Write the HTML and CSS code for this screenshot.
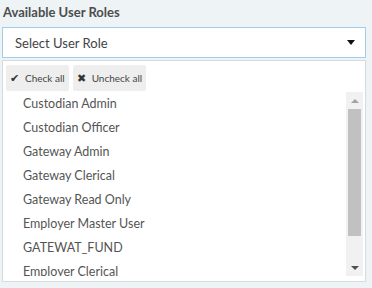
FILE: index.html
```html
<!DOCTYPE html>
<html lang="en">
<head>
  <meta charset="UTF-8" />
  <title>Available User Roles</title>
  <link rel="stylesheet" href="styles.css">
</head>
<body>
  <div class="field">
    <label class="field-label">Available User Roles</label>
    <div class="select-box">
      <span>Select User Role</span>
      <span class="caret"></span>
    </div>
    <div class="dropdown">
      <div class="toolbar">
        <button class="tool-btn"><span class="ico">&#10004;</span>Check all</button>
        <button class="tool-btn"><span class="ico">&#10006;</span>Uncheck all</button>
      </div>
      <div class="list-wrap">
        <ul class="options">
          <li>Custodian Admin</li>
          <li>Custodian Officer</li>
          <li>Gateway Admin</li>
          <li>Gateway Clerical</li>
          <li>Gateway Read Only</li>
          <li>Employer Master User</li>
          <li>GATEWAT_FUND</li>
          <li>Employer Clerical</li>
        </ul>
        <div class="scrollbar">
          <div class="arrow up"></div>
          <div class="track"><div class="thumb"></div></div>
          <div class="arrow down"></div>
        </div>
      </div>
    </div>
  </div>
</body>
</html>
```

FILE: styles.css
```css
body {
  margin: 0;
  background-color: #eef3f6;
  font-family: Lato, 'Open Sans', sans-serif;
  color: #555;
}
.field {
  padding: 4px 6px 0 2px;
}
.field-label {
  display: block;
  font-weight: bold;
  font-size: 13px;
  line-height: 16px;
  margin-left: 1px;
  color: #4d4d4d;
}
.select-box {
  margin-top: 7px;
  height: 29px;
  background: white;
  border: 1px solid #a3cdef;
  display: flex;
  align-items: center;
  justify-content: space-between;
  padding: 0 10px 0 12px;
  font-size: 13px;
  color: #444;
}
.caret {
  width: 0;
  height: 0;
  border-left: 4px solid transparent;
  border-right: 4px solid transparent;
  border-top: 5px solid #111;
}
.dropdown {
  margin-top: 2px;
  height: 220px;
  background: white;
  border: 1px solid #d5dce1;
  overflow: hidden;
}
.toolbar {
  display: flex;
  gap: 4px;
  padding: 4px 3px 1px;
}
.tool-btn {
  background: #eee;
  border: none;
  border-radius: 2px;
  height: 26px;
  padding: 0 4px;
  font-family: inherit;
  font-size: 10px;
  color: #444;
  display: flex;
  align-items: center;
}
.ico {
  font-size: 11px;
  color: #333;
  margin-right: 6px;
}
.list-wrap {
  display: flex;
  height: 184px;
}
.options {
  flex: 1;
  list-style: none;
  margin: 0;
  padding: 0;
  overflow: hidden;
}
.options li {
  height: 24px;
  line-height: 24px;
  padding-left: 20px;
  font-size: 12.5px;
  color: #555;
}
.scrollbar {
  width: 17px;
  margin-right: 2px;
  background: #f1f1f1;
  display: flex;
  flex-direction: column;
}
.arrow {
  height: 17px;
  display: flex;
  align-items: center;
  justify-content: center;
}
.arrow.up::before {
  content: '';
  border-left: 4px solid transparent;
  border-right: 4px solid transparent;
  border-bottom: 4px solid #a3a3a3;
}
.arrow.down::before {
  content: '';
  border-left: 4px solid transparent;
  border-right: 4px solid transparent;
  border-top: 4px solid #505050;
}
.track {
  flex: 1;
  padding: 0 2px;
}
.thumb {
  height: 127px;
  background: #c1c1c1;
}
```
